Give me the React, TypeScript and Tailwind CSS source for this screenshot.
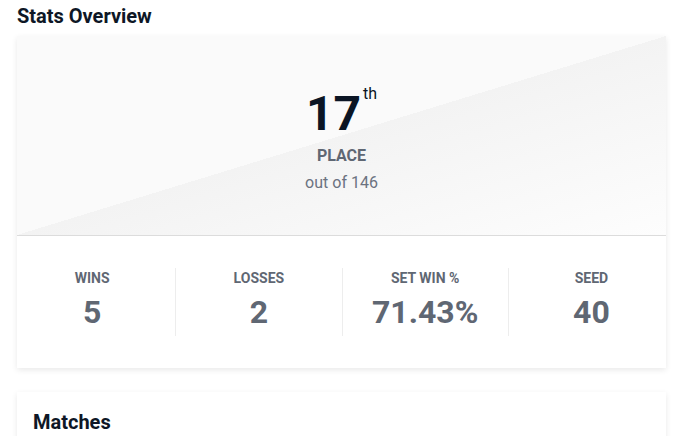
import React from 'react';

type Stat = {
  label: string;
  value: string;
};

const stats: Stat[] = [
  { label: 'Wins', value: '5' },
  { label: 'Losses', value: '2' },
  { label: 'Set Win %', value: '71.43%' },
  { label: 'Seed', value: '40' },
];

export default function App() {
  return (
    <div className="h-[436px] overflow-hidden bg-white pl-[17px] pr-[15px] pt-[2px] font-['Roboto',sans-serif]">
      <h2 className="mb-1.5 text-[20px] font-bold leading-7 text-[#0e1726]">Stats Overview</h2>

      {/* placement card */}
      <div className="mb-6 bg-white shadow-[0_2px_6px_rgba(0,0,0,0.09)]">
        <div className="flex flex-col items-center border-b border-[#dcdcdc] bg-[linear-gradient(to_bottom_right,#fafafa_50%,#f3f3f3_50%,#fdfdfd_100%)] pb-[40px] pt-[54px]">
          <div className="flex items-start">
            <span className="text-5xl font-bold leading-none text-[#0b1524]">17</span>
            <span className="ml-0.5 -mt-2 text-[16px] leading-6 text-[#0b1524]">th</span>
          </div>
          <div className="mt-1.5 text-[16px] font-bold uppercase leading-6 text-[#5f6773]">Place</div>
          <div className="mt-[3px] text-[16px] leading-6 text-[#6b7280]">out of 146</div>
        </div>

        <div className="py-8">
          <div className="-mx-2 grid grid-cols-4">
            {stats.map((s, i) => (
              <div
                key={s.label}
                className={`flex flex-col items-center ${i > 0 ? 'border-l border-[#ededed]' : ''}`}
              >
                <div className="text-[14px] font-bold uppercase leading-5 text-[#5f6773]">{s.label}</div>
                <div className="text-[32px] font-bold leading-[48px] text-[#5f6773]">{s.value}</div>
              </div>
            ))}
          </div>
        </div>
      </div>

      {/* matches card */}
      <div className="bg-white p-4 shadow-[0_2px_6px_rgba(0,0,0,0.09)]">
        <h3 className="text-[20px] font-bold leading-7 text-[#0e1726]">Matches</h3>
        <div className="h-40" />
      </div>
    </div>
  );
}
